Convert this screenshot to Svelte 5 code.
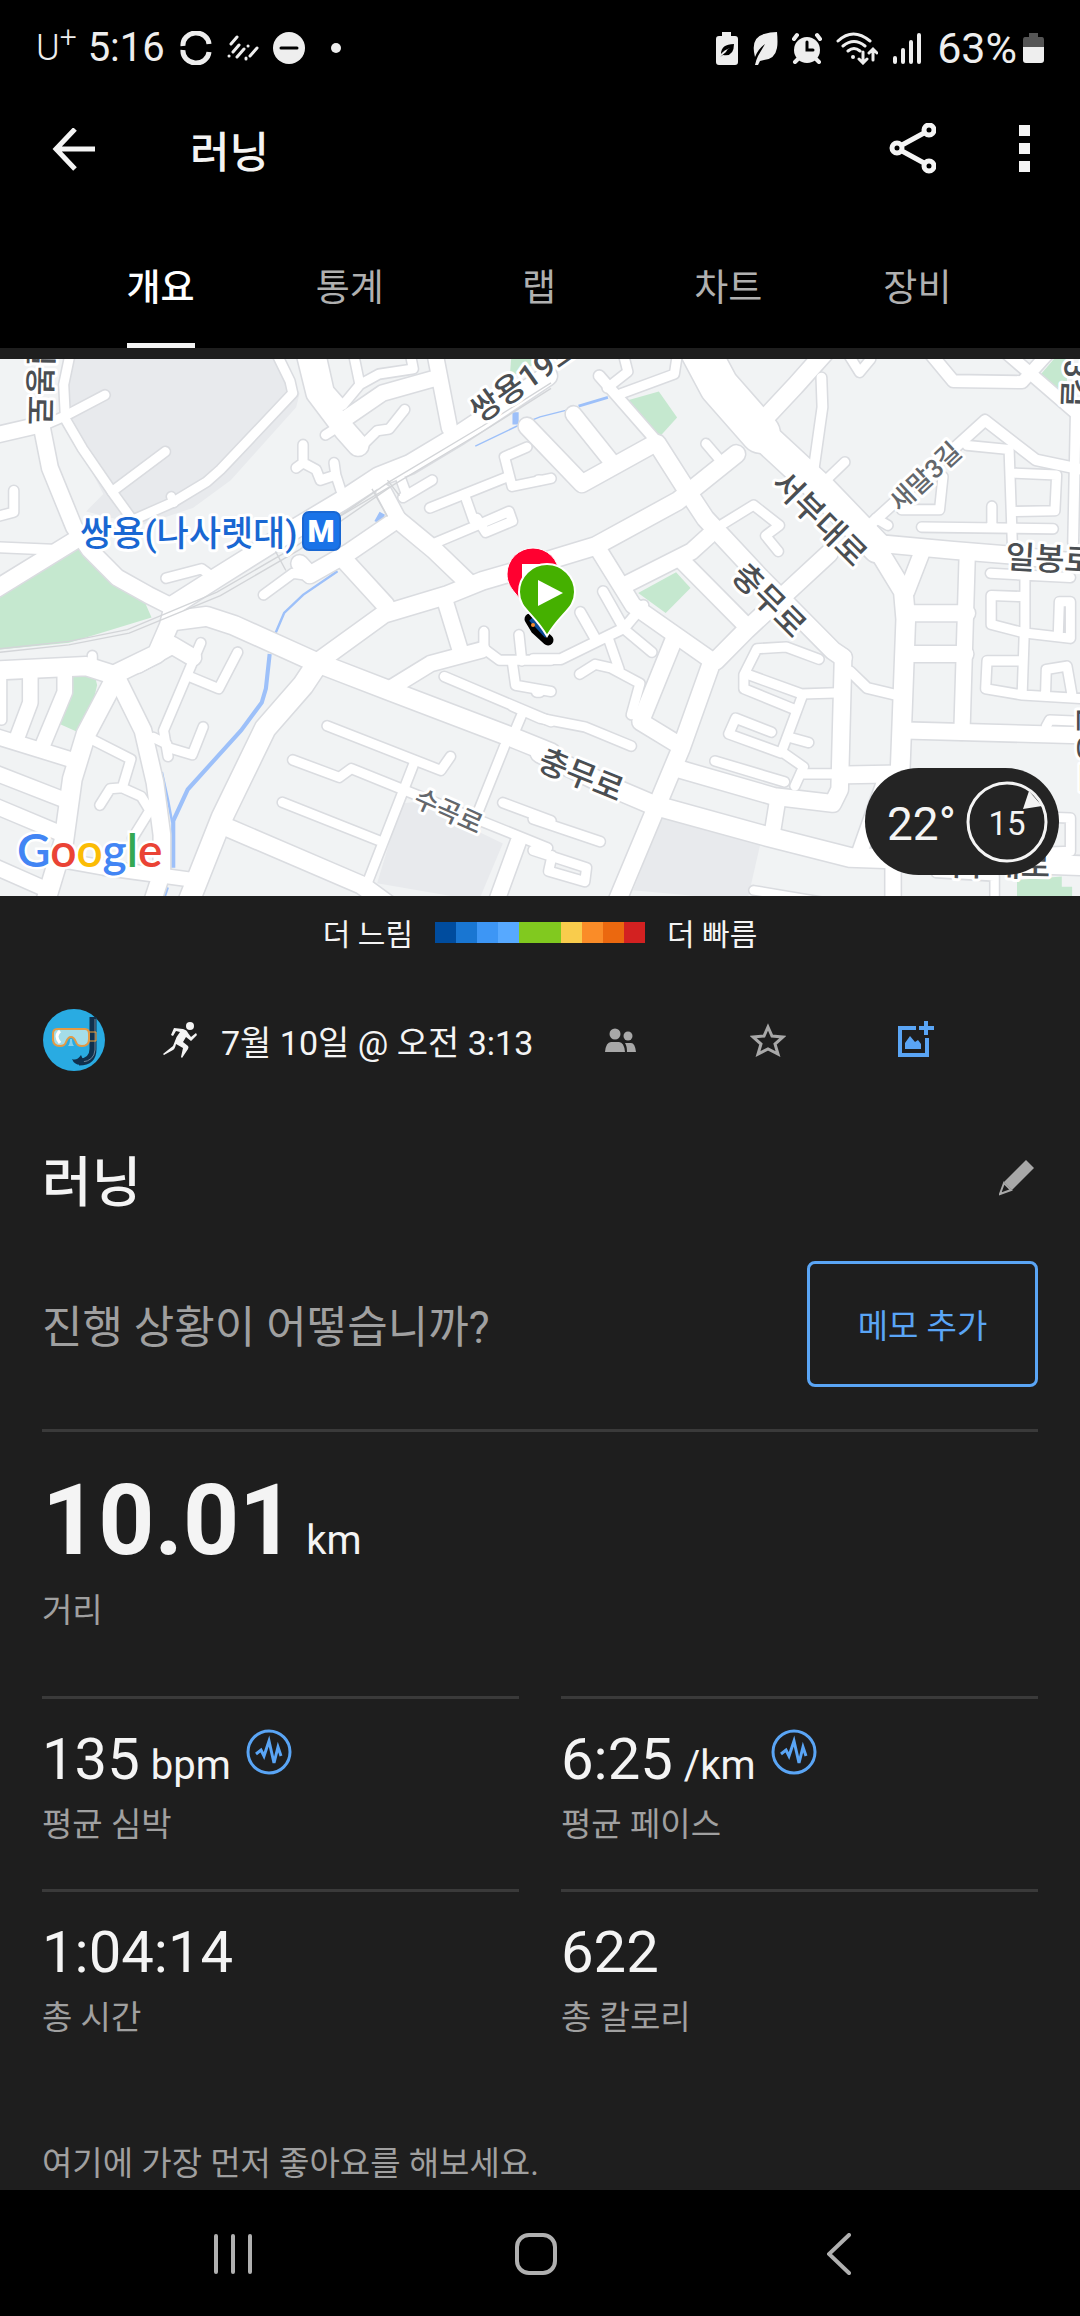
<script>
  const tabs = ['개요', '통계', '랩', '차트', '장비'];
  let active = $state(0);

  const paceColors = [
    '#004c9e', '#1976d2', '#3d96f5', '#57a9ff', '#81c91f',
    '#81c91f', '#f9cc4c', '#fa8c28', '#eb680f', '#d32121',
  ];

  const stats = [
    { value: '135', unit: 'bpm', label: '평균 심박', chart: true },
    { value: '6:25', unit: '/km', label: '평균 페이스', chart: true },
    { value: '1:04:14', label: '총 시간' },
    { value: '622', label: '총 칼로리' },
  ];

  // Roads are [width, path]; the east list is drawn 1568 units further right.
  const west = [
    [48, 'M-20 678L215 535'],
    [44, 'M-20 232L120 200'],
    [46, 'M120 200L145 325L215 495L260 560L340 640L430 690L500 725'],
    [26, 'M120 205L190 175L305 115'],
    [26, 'M205 -10L185 85L190 185L240 270L330 400L385 475'],
    [26, 'M325 393L480 278'],
    [26, 'M385 475L500 425L600 365L640 330L850 110L842 75L800 -10'],
    [24, 'M505 425L497 407'],
    [28, 'M-10 553L150 560'],
    [26, 'M40 390L40 452L-10 465'],
    [54, 'M500 722L630 640L840 510L1000 415L1100 350L1190 315L1330 232L1440 160L1590 60'],
    [48, 'M870 600L900 632L1010 570L1150 475'],
    [26, 'M765 690L850 628L900 635'],
    [26, 'M482 642L585 615L620 640'],
    [52, 'M-20 908L250 895L330 920L455 860L490 780L500 740'],
    [48, 'M400 890L500 835L560 870'],
    [54, 'M500 765L600 752L680 778L920 885L1130 965L1500 1105L1600 1145'],
    [50, 'M920 885L1115 745L1300 690L1400 650L1590 595'],
    [50, 'M1000 590L1120 720'],
    [50, 'M1150 470L1260 560L1360 655'],
    [44, 'M1155 470L1115 395'],
    [26, 'M1170 410L1255 360M1180 400L1165 360'],
    [60, 'M920 890L880 950L770 1075L645 1330L545 1580'],
    [48, 'M345 940L415 1080L450 1230L470 1380L470 1490L440 1580'],
    [54, 'M335 930L250 1090L210 1220L185 1400L130 1580'],
    [42, 'M-20 1095L210 1165M-20 1200L200 1285M-20 1295L180 1378M-20 1470L140 1540'],
    [42, 'M88 910L88 1000L50 1100M188 910L188 970L125 1120'],
    [26, 'M5 910L5 1050M268 865L268 900'],
    [26, 'M583 828L475 1080L488 1155M550 925L635 960L690 855'],
    [26, 'M490 1130L558 1150L590 1070M445 1100L485 1120'],
    [26, 'M265 1105L380 1163L355 1245L320 1248L290 1295M355 1245L410 1270L435 1310L385 1390'],
    [40, 'M160 1450L300 1475L560 1510'],
    [50, 'M650 1355L1050 1525L1140 1590'],
    [26, 'M950 1067L1280 1195L1308 1155M850 1165L985 1215L1020 1190L1170 1250L1590 1418'],
    [26, 'M820 1287L1100 1397M1200 1180L1062 1530M1290 925L1600 1055'],
    [26, 'M1515 1035L1485 1105M1465 1125L1390 1310M1460 1288L1600 1340'],
    [44, 'M1505 1400L1435 1590'],
    [44, 'M1140 955L1250 888L1400 848M1335 845L1290 700'],
    [26, 'M1405 795L1405 845L1450 878L1600 878M1507 805L1515 880M1487 880L1497 950L1600 968'],
    [60, 'M890 -10L920 110L1000 215L1040 260'],
    [44, 'M985 195L1110 110L1270 65M1262 -10L1305 210'],
    [26, 'M945 230L1000 195M1175 157L1130 213L1095 218L1050 262'],
    [26, 'M1025 -10L1045 85L995 145L955 100L930 -10M1045 85L1100 55L1200 40L1190 -10'],
    [26, 'M880 258L880 310L860 325M880 310L918 330L930 360L975 345L970 310M975 345L990 390'],
    [26, 'M1248 440L1475 350M1530 265L1465 293L1487 378L1600 355'],
    [26, 'M1350 405L1375 475M1265 540L1385 490L1478 450L1488 478L1410 510L1385 470'],
    [48, 'M1530 205L1690 370L1900 255'],
  ];

  const east = [
    [112, 'M450 -40L520 90L640 225'],
    [84, 'M640 225L820 390L980 555'],
    [54, 'M975 550L1055 680L1062 760L1050 1080L1045 1210'],
    [44, 'M97 170L210 310'],
    [30, 'M172 60L340 250'],
    [50, 'M340 255L430 395L480 470L640 640L850 850L880 870'],
    [26, 'M225 115L390 55L400 -10M195 95L255 48L240 -10'],
    [50, 'M650 185L740 90L830 -10'],
    [28, 'M817 65L820 150L793 340'],
    [26, 'M820 370L885 308M890 -10L928 50L960 12L955 -20'],
    [34, 'M1120 -20L1200 75L1400 78L1480 -10M1350 -10L1560 170'],
    [28, 'M1556 150L1548 540'],
    [30, 'M945 500L1292 188L1440 302L1600 335'],
    [26, 'M1240 260L1362 272L1372 560M1170 350L1160 445L1050 445'],
    [26, 'M1380 340L1500 345L1495 448L1380 450M1108 495L1490 500M1312 435L1312 495M1010 490L975 470'],
    [48, 'M960 540L1200 562L1360 575L1600 600'],
    [44, 'M1110 565L1065 680M1240 590L1225 1085'],
    [46, 'M1070 743L1240 743M1075 860L1235 860M1060 1080L1600 1095'],
    [26, 'M500 505L620 432L695 490L655 520L692 565'],
    [50, 'M0 598L160 550L400 420L570 285'],
    [46, 'M240 665L440 565L490 520'],
    [46, 'M170 560L270 720L500 880M410 590L600 780'],
    [50, 'M510 880L600 790L840 570M500 880L410 1130L220 1580'],
    [26, 'M482 255L525 305M0 360L-5 360M0 970L-10 970'],
    [28, 'M-20 875L60 875L245 785L300 720M183 680L240 780M117 740L160 815'],
    [26, 'M200 820L230 905M240 785L325 855M115 918L160 890L205 900L290 945L265 1035'],
    [48, 'M390 815L292 1055L400 1120'],
    [26, 'M-80 1010L0 1045L130 1070L265 1125'],
    [48, 'M400 1190L680 1270L850 1290L870 1250L880 870'],
    [44, 'M690 1280L672 1390'],
    [26, 'M810 875L715 840L630 845L592 920L592 960L740 1020M600 918L760 975L860 972'],
    [26, 'M760 985L700 1145L548 1090L568 1045L672 1085M700 1140L765 1185L740 1240'],
    [26, 'M725 1100L780 1115M765 1205L860 1205M508 1168L710 1228'],
    [28, 'M900 910L950 958L1050 982'],
    [48, 'M890 1208L1045 1205'],
    [54, 'M0 1145L200 1240L330 1295L660 1385L900 1445L1600 1470'],
    [44, 'M925 1440L1000 1230M1025 1460L1025 1590'],
    [26, 'M1308 628L1540 640M1408 640L1408 800M1400 695L1310 692L1310 775L1408 800L1540 815L1540 710L1508 710L1505 800'],
    [26, 'M1406 800L1400 975M1400 880L1298 880L1294 960L1400 978L1600 990M1468 970L1470 905L1530 895L1545 980'],
    [26, 'M1470 1068L1480 1050L1600 1055M1480 1330L1540 1332L1540 1428L1480 1430'],
    [26, 'M-20 1335L175 1400M-20 1425L135 1475L130 1515L25 1485L35 1440'],
    [24, 'M620 1540L860 1580M1150 1490L1320 1500L1320 1590'],
  ];
</script>

<div class="screen">
  <div class="status">
    <div class="status-side">
      <span class="carrier">U<sup>+</sup></span>
      <span class="clock">5:16</span>
      <svg width="34" height="34" viewBox="0 0 34 34" fill="none" stroke="#eee" stroke-width="5">
        <path d="M4 15A13 12 0 0 1 30 13M4 19A13 12 0 0 0 30 21" />
      </svg>
      <svg width="32" height="28" viewBox="0 0 32 28" stroke="#eee" stroke-width="3" stroke-linecap="round">
        <path d="M10 3L4 10M12 11L6 18M2 22h.1M17 15L10 23M21 12h.1M30 14L23 22M19 24v1" />
      </svg>
      <svg width="32" height="32" viewBox="0 0 32 32">
        <circle cx="16" cy="16" r="16" fill="#eee" /><path d="M8 16h16" stroke="#000" stroke-width="3" stroke-linecap="round" />
      </svg>
      <svg class="dot" width="10" height="10" viewBox="0 0 10 10"><circle cx="5" cy="5" r="5" fill="#eee" /></svg>
    </div>
    <div class="status-side right">
      <svg width="22" height="34" viewBox="0 0 22 34">
        <path fill="#eee" d="M6 1h9v4h4q3 0 3 3v23q0 3-3 3H3q-3 0-3-3V8q0-3 3-3h3z" />
        <path d="M5 23q0-10 13-10q0 13-11 11l-3 2l6-5q1-3 4-4q-6 2-9 6z" />
      </svg>
      <svg width="26" height="34" viewBox="0 0 26 34">
        <path fill="#eee" d="M25 1q1 11 0 16q-2 11-13 12l-4 1-2 4H3q1-5 3-9l7-12q-7 5-10 13Q-2 7 12 3q6-2 13-2z" />
      </svg>
      <svg width="30" height="32" viewBox="0 0 30 32" fill="none" stroke="#eee" stroke-linecap="round">
        <circle cx="15" cy="18" r="13" fill="#eee" stroke="none" />
        <path stroke-width="4" d="M2 7l3-4M28 7l-3-4M6 27l-3 3M24 27l3 3" />
        <path stroke="#000" stroke-width="3" d="M15 10v8h6" />
      </svg>
      <svg width="42" height="34" viewBox="0 0 42 34" fill="none" stroke="#eee" stroke-width="3" stroke-linecap="round">
        <path d="M2 10q15-14 32 0M7 15q11-9 22 0M12 20q6-5 12 0M27 21v10M23 28l4 4 4-4M37 29V19M33 22l4-4 4 4" />
        <circle cx="17" cy="26" r="2" fill="#eee" stroke="none" />
      </svg>
      <svg width="29" height="32" viewBox="0 0 29 32" stroke="#eee" stroke-width="4" stroke-linecap="round">
        <path d="M3 26v4M11 18v12M19 10v20M27 3v27" />
      </svg>
      <span class="percent">63%</span>
      <svg width="21" height="30" viewBox="0 0 21 30">
        <path fill="#555" d="M6 0h9v4h4q2 0 2 3v7H0V7q0-3 2-3h4z" /><path fill="#eee" d="M0 14h21v13q0 3-3 3H3q-3 0-3-3z" />
      </svg>
    </div>
  </div>

  <header>
    <button class="icon" aria-label="뒤로">
      <svg width="44" height="44" viewBox="0 0 44 44" fill="none" stroke="#f4f4f4" stroke-width="5">
        <path d="M43 21H5M23 1L4 21l19 20" />
      </svg>
    </button>
    <h1>러닝</h1>
    <button class="icon" aria-label="공유">
      <svg width="48" height="54" viewBox="0 0 48 54" fill="none" stroke="#f4f4f4" stroke-width="5">
        <circle cx="9" cy="25" r="5" /><circle cx="41" cy="7" r="5" /><circle cx="41" cy="43" r="5" />
        <path d="M14 22L36 10M14 28L36 40" />
      </svg>
    </button>
    <button class="icon more" aria-label="더보기">
      <svg width="12" height="50" viewBox="0 0 12 50" fill="#f4f4f4">
        <path d="M1 0h11v11H1zM1 18h11v11H1zM1 36h11v11H1z" />
      </svg>
    </button>
  </header>

  <nav class="tabs">
    {#each tabs as tab, i}
      <button class:active={i === active} onclick={() => (active = i)}><span>{tab}</span></button>
    {/each}
  </nav>

  <main>
    <div class="map">
      <svg class="tiles" viewBox="0 0 1080 537" role="img" aria-label="지도">
        <rect width="1080" height="537" fill="#f1f3f4" />
        <g transform="translate(0 -4) scale(.3444 .3476)">
          <g fill="#e8eaed">
            <path d="M215 0H800L870 110L860 150L670 360L560 440L410 490L250 450L300 400L190 190L190 70z" />
            <path d="M1165 1290L1210 1285L1460 1405L1390 1570L1095 1520z" />
            <path d="M1923 1325L2208 1405L2170 1570L1838 1540z" />
          </g>
          <g fill="#c5e8cf">
            <path d="M-10 695L225 555L330 650L420 710L440 755L200 828L-10 848z" />
            <path d="M212 925L275 920L282 950L270 1000L222 1083L170 1060L205 990z" />
            <path d="M1485 0H1600L1480 65z" />
            <path d="M1823 130L1913 105L1966 180L1918 232L1898 230z" />
            <path d="M1853 685L1963 625L2005 670L1933 742z" />
            <path d="M3010 70L3070 0H3098V120z" />
            <path d="M2953 1510L3083 1500V1530H3113V1570H2953z" />
          </g>
          <g fill="none" stroke="#9dc0f9" stroke-width="7">
            <path d="M980 622L880 690L825 742L798 805" />
            <path stroke-width="12" d="M783 860L772 960L760 1000L700 1080L545 1250L503 1340V1475" />
            <path d="M470 1200L488 1280L500 1345" />
            <path stroke-width="4" d="M1380 262L1500 205L1568 178L1660 155" />
            <path stroke-width="8" d="M1680 147L1765 122" />
            <path stroke-width="18" d="M1497 165V200M1110 455L1095 482M482 1530L472 1560" />
          </g>
          <g fill="none" stroke-linejoin="round" stroke-linecap="round" stroke="#dadce0">
            {#each west as [w, d]}<path {d} stroke-width={w + 9} />{/each}
            <g transform="translate(1568)">
              {#each east as [w, d]}<path {d} stroke-width={w + 9} />{/each}
            </g>
          </g>
          <g fill="none" stroke-linejoin="round" stroke-linecap="round" stroke="#fff">
            {#each west as [w, d]}<path {d} stroke-width={w} />{/each}
            <g transform="translate(1568)">
              {#each east as [w, d]}<path {d} stroke-width={w} />{/each}
            </g>
          </g>
          <g fill="none" stroke="#d3d5d8" stroke-width="4">
            <path d="M-10 846L200 824L370 790L630 682L860 550L1130 365L1400 205L1600 80" />
            <path d="M-10 856L200 834L375 800L640 692L870 560L1140 375L1410 215L1600 96" />
            <path d="M985 465L1130 380M800 565L830 620M1080 385L1125 465M1125 360L1160 405" />
          </g>
        </g>

        <g class="labels">
          <text transform="translate(28 66) rotate(91)" text-anchor="end">일봉로</text>
          <text transform="translate(480 65) rotate(-35)">쌍용19로</text>
          <text transform="translate(770 126) rotate(45)">서부대로</text>
          <text transform="translate(730 218) rotate(45)">충무로</text>
          <text transform="translate(536 410) rotate(22)">충무로</text>
          <text transform="translate(1005 209) rotate(3)">일봉로</text>
          <text transform="translate(1063 48) rotate(92)" text-anchor="end">새말3길</text>
          <text transform="translate(1080 345) rotate(90)">일봉로</text>
          <text transform="translate(1050 518) rotate(1)" text-anchor="end">서부대로</text>
          <text class="minor" transform="translate(900 154) rotate(-43)">새말3길</text>
          <text class="minor" transform="translate(412 446) rotate(24)">수곡로</text>
          <text class="station" x="80" y="187">쌍용(나사렛대)</text>
        </g>
        <rect x="303" y="153" width="37" height="38" rx="6" fill="#1a73e8" stroke="#1967d2" stroke-width="2" />
        <text class="metro" x="321" y="183" text-anchor="middle">M</text>

        <path d="M530 260L536 270L548 281" fill="none" stroke="#000" stroke-width="11" stroke-linecap="round" />
        <path d="M531 260L547 277" stroke="#0a4a97" stroke-width="5" />
        <circle cx="533" cy="266" r="2" fill="#f28a2e" />
        <path d="M532 256C520 236 507 231 507 215a26 26 0 0 1 52 0C559 231 544 236 532 256z" fill="#ff0030" stroke="#fff" stroke-width="1" />
        <path d="M522 205h23v18h-23z" fill="#fff" />
        <path d="M547 277C533 253 519 250 519 233a28 28 0 0 1 56 0C575 250 561 253 547 277z" fill="#45b000" stroke="#fff" stroke-width="2" />
        <path d="M538 221v26l25-13z" fill="#fff" />

        <text class="google" x="17" y="508"><tspan fill="#4285f4">G</tspan><tspan fill="#ea4335">o</tspan><tspan fill="#fbbc05">o</tspan><tspan fill="#4285f4">g</tspan><tspan fill="#34a853">l</tspan><tspan fill="#ea4335">e</tspan></text>
      </svg>
      <div class="weather">
        <span>22°</span>
        <div class="wind">
          <svg width="82" height="82" viewBox="0 0 82 82">
            <circle cx="41" cy="41" r="39" fill="none" stroke="#f4f4f4" stroke-width="3" />
            <path d="M63 10L76 25L57 28z" fill="#f4f4f4" />
          </svg>
          <span>15</span>
        </div>
      </div>
    </div>

    <div class="legend">
      <span>더 느림</span>
      <div class="scale">
        {#each paceColors as color}<i style="background:{color}"></i>{/each}
      </div>
      <span>더 빠름</span>
    </div>

    <div class="meta">
      <svg class="avatar" width="62" height="62" viewBox="0 0 62 62">
        <circle cx="31" cy="31" r="31" fill="#29abe2" />
        <path d="M50 8v32q0 13-14 13" fill="none" stroke="#10304d" stroke-width="7" />
        <path d="M52 10v31q-1 11-13 12" fill="none" stroke="#6d8296" stroke-width="1" />
        <path d="M29 50q5 2 9-4l4 9q-10 3-13-5z" fill="#10304d" />
        <path d="M44 23h9v9h-9z" fill="none" stroke="#f2a33a" stroke-width="1" />
        <path d="M9 24h3v8H9zM44 24h3v8h-3z" fill="#fbb03b" />
        <path d="M14 20h28q4 0 4 5v5q0 7-7 7-5 0-6-4-2-5-5-5t-5 5q-1 4-6 4-7 0-7-7v-5q0-5 4-5z" fill="#a4dde9" stroke="#e39a45" stroke-width="2" />
        <path d="M17 22q-6 5 0 12" fill="none" stroke="#fff" stroke-width="3" />
        <path d="M25 37q2-2 2-7h2q0 5 2 7z" fill="#7fd0ee" />
      </svg>
      <svg class="runner" width="34" height="36" viewBox="0 0 34 36" fill="#f4f4f4">
        <circle cx="27" cy="4" r="4" />
        <path d="M11 6l9 1q4 1 5 4l3 4 5-4 1 2-6 6-5-4-3 5 5 4q1 1 0 3l-6 9-1-1 2-9-7-4q-1 5-3 6L1 33l-1-1 10-8 2-5q1-4 5-9l-4-1-3 5-2-1z" />
      </svg>
      <span class="date">7월 10일 @ 오전 3:13</span>
      <div class="actions">
        <button class="icon" aria-label="공개 범위">
          <svg width="32" height="24" viewBox="0 0 32 24" fill="#a8a8a8">
            <circle cx="11" cy="6" r="5.500" /><circle cx="24" cy="8" r="4.500" />
            <path d="M1 24q1-10 6-10h8q5 0 6 10zM21 15h6q4 0 5 9h-9q0-6-2-9z" />
          </svg>
        </button>
        <button class="icon" aria-label="즐겨찾기">
          <svg width="36" height="34" viewBox="0 0 36 34" fill="none" stroke="#a8a8a8" stroke-width="3">
            <path d="M18 4l4 9 11 1-8 7 3 10-10-5-10 5 3-10-8-7 11-1z" />
          </svg>
        </button>
        <button class="icon" aria-label="사진 추가">
          <svg width="38" height="38" viewBox="0 0 38 38" fill="none" stroke="#5aa5f5" stroke-width="4">
            <path d="M19 7H3v27h27V17M22 7h15M29 0v14" />
            <path d="M8 28v-6l5-7 5 6 3-2 3 4v5z" fill="#5aa5f5" stroke="none" />
          </svg>
        </button>
      </div>
    </div>

    <div class="name">
      <h2>러닝</h2>
      <button class="icon" aria-label="이름 편집">
        <svg width="36" height="36" viewBox="0 0 36 36">
          <path d="M27 0l8 8-22 22-8-8z" fill="#a8a8a8" />
          <path d="M5 23L1 34l11-4z" fill="none" stroke="#a8a8a8" stroke-width="2" />
        </svg>
      </button>
    </div>

    <div class="note">
      <p>진행 상황이 어떻습니까?</p>
      <button>메모 추가</button>
    </div>

    <section class="distance">
      <div class="value big"><strong>10.01</strong><span>km</span></div>
      <div class="label">거리</div>
    </section>

    <section class="stats">
      {#each stats as s}
        <div class="stat">
          <div class="value">
            <b>{s.value}</b>
            {#if s.unit}<span>{s.unit}</span>{/if}
            {#if s.chart}
              <button class="icon" aria-label="차트 보기">
                <svg width="46" height="46" viewBox="0 0 46 46" fill="none" stroke="#5aa5f5">
                  <circle cx="23" cy="23" r="21" stroke-width="3" />
                  <path stroke-width="3" d="M10 25l5-4 3 6 5-15 5 22 4-16 3 9" />
                </svg>
              </button>
            {/if}
          </div>
          <div class="label">{s.label}</div>
        </div>
      {/each}
    </section>

    <p class="likes">여기에 가장 먼저 좋아요를 해보세요.</p>
  </main>

  <nav class="system">
    <button class="icon" aria-label="최근 앱">
      <svg width="40" height="40" viewBox="0 0 40 40" stroke="#b0b0b0" stroke-width="4" stroke-linecap="round">
        <path d="M3 2v36M20 2v36M37 2v36" />
      </svg>
    </button>
    <button class="icon" aria-label="홈">
      <svg width="42" height="42" viewBox="0 0 42 42"><rect x="2" y="2" width="38" height="38" rx="12" fill="none" stroke="#b0b0b0" stroke-width="4" /></svg>
    </button>
    <button class="icon" aria-label="뒤로 가기">
      <svg width="24" height="42" viewBox="0 0 24 42" fill="none" stroke="#b0b0b0" stroke-width="4" stroke-linecap="round">
        <path d="M22 2L2 21l20 19" />
      </svg>
    </button>
  </nav>
</div>

<style>
  :global(body) {
    background: #000;
  }
  .screen {
    background: #000;
    color: #f4f4f4;
    font-family: Roboto, 'Noto Sans CJK KR', sans-serif;
    font-size: 33px;
    line-height: 40px;
  }
  svg {
    display: block;
    flex-shrink: 0;
  }
  h1,
  h2,
  p {
    margin: 0;
    font-weight: 500;
  }
  button {
    padding: 0;
    border: 0;
    background: none;
    color: inherit;
    font: inherit;
    cursor: pointer;
  }
  .icon {
    display: flex;
    align-items: center;
    justify-content: center;
  }
  .status {
    display: flex;
    justify-content: space-between;
    align-items: center;
    height: 96px;
    padding: 0 36px;
    color: #eee;
    font-size: 40px;
  }
  .status-side {
    display: flex;
    align-items: center;
    gap: 14px;
  }
  .carrier {
    font-size: 36px;
    font-weight: 300;
  }
  .carrier sup {
    font-size: 30px;
    line-height: 0;
  }
  .clock {
    margin-left: -3px;
  }
  .dot {
    margin-left: 12px;
  }
  .percent {
    margin: 0 -8px 0 2px;
    font-size: 43px;
  }
  header {
    display: flex;
    align-items: center;
    height: 108px;
    padding: 0 50px 0 52px;
  }
  header h1 {
    flex: 1;
    margin-left: 94px;
    padding-top: 6px;
    font-size: 43px;
    line-height: 50px;
  }
  header .more {
    margin-left: 82px;
  }
  .tabs {
    display: grid;
    grid-template-columns: repeat(5, 1fr);
    height: 144px;
    padding: 0 68px 0 66px;
  }
  .tabs button {
    display: flex;
    justify-content: center;
    color: #b0b0b0;
    font-size: 37px;
  }
  .tabs span {
    height: 100%;
    box-sizing: border-box;
    padding-top: 65px;
  }
  .tabs .active {
    color: #fff;
    font-weight: 500;
  }
  .tabs .active span {
    border-bottom: 5px solid #f4f4f4;
  }
  main {
    padding-top: 11px;
    background: #1e1e1e;
  }
  .map {
    position: relative;
  }
  .tiles {
    width: 100%;
    height: auto;
  }
  .labels text {
    fill: #4a4e52;
    stroke: #fff;
    stroke-width: 6px;
    stroke-linejoin: round;
    paint-order: stroke;
    font-size: 32px;
    font-weight: 500;
  }
  .labels .minor {
    fill: #63676c;
    font-size: 26px;
  }
  .labels .station {
    fill: #1967d2;
    font-size: 35px;
  }
  .metro {
    fill: #fff;
    font-size: 31px;
    font-weight: 900;
  }
  .google {
    font-family: Lato, sans-serif;
    font-size: 46px;
    stroke: #fff;
    stroke-width: 5px;
    paint-order: stroke;
    font-weight: 600;
  }
  .weather {
    position: absolute;
    right: 21px;
    bottom: 21px;
    display: flex;
    align-items: center;
    justify-content: space-between;
    box-sizing: border-box;
    width: 194px;
    height: 107px;
    padding: 0 11px 0 22px;
    border-radius: 54px;
    background: #242424;
    font-size: 46px;
  }
  .weather span {
    padding-top: 4px;
  }
  .wind {
    display: grid;
    place-items: center;
    font-size: 33px;
  }
  .wind > * {
    grid-area: 1 / 1;
  }
  .legend {
    display: flex;
    align-items: center;
    justify-content: center;
    gap: 22px;
    height: 72px;
    font-size: 30px;
  }
  .legend span {
    padding-top: 5px;
  }
  .scale {
    display: flex;
  }
  .scale i {
    width: 21px;
    height: 21px;
  }
  .meta {
    display: flex;
    align-items: center;
    height: 144px;
    padding: 0 90px 0 43px;
  }
  .runner {
    margin: 0 24px 0 58px;
  }
  .date {
    flex: 1;
    padding-top: 6px;
    font-size: 34px;
    white-space: nowrap;
  }
  .actions {
    display: grid;
    grid-template-columns: repeat(3, 148px);
  }
  .name {
    display: flex;
    align-items: center;
    justify-content: space-between;
    height: 132px;
    padding: 0 45px 0 42px;
  }
  .name h2 {
    padding-top: 12px;
    font-size: 54px;
    line-height: 60px;
  }
  .note {
    display: flex;
    align-items: center;
    justify-content: space-between;
    margin: 17px 42px 0;
    padding-bottom: 42px;
    border-bottom: 3px solid #3a3a3a;
    color: #a0a0a0;
  }
  .note p {
    padding-top: 8px;
    font-size: 44px;
    font-weight: 400;
    line-height: 50px;
  }
  .note button {
    width: 231px;
    height: 126px;
    padding-top: 6px;
    border: 3px solid #5aa5f5;
    border-radius: 8px;
    color: #5aa5f5;
  }
  .distance {
    padding: 29px 42px 65px;
  }
  .value {
    display: flex;
    align-items: baseline;
    gap: 11px;
    height: 68px;
    margin-bottom: 12px;
    font-size: 40px;
    line-height: 68px;
  }
  .value b {
    font-size: 58px;
    font-weight: 400;
  }
  .value .icon {
    align-self: flex-start;
    margin: 4px 0 0 4px;
  }
  .value.big {
    height: 120px;
    margin-bottom: 10px;
    line-height: 120px;
  }
  .value.big strong {
    font-size: 98px;
    font-weight: 700;
  }
  .label {
    color: #a0a0a0;
  }
  .stats {
    display: grid;
    grid-template-columns: 1fr 1fr;
    column-gap: 42px;
    padding: 0 42px;
  }
  .stat {
    padding: 26px 0 44px;
    border-top: 3px solid #3a3a3a;
  }
  .likes {
    padding: 62px 42px 6px;
    color: #a0a0a0;
    font-weight: 400;
  }
  .system {
    display: grid;
    grid-template-columns: repeat(3, 1fr);
    height: 126px;
    padding: 2px 90px 0 82px;
    box-sizing: border-box;
  }
</style>
